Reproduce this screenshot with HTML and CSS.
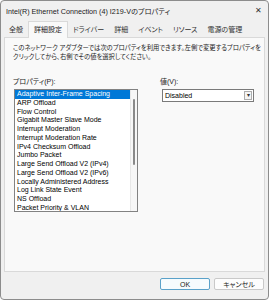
FILE: index.html
```html
<!DOCTYPE html>
<html lang="ja">
<head>
    <meta charset="UTF-8">
    <title>Intel(R) Ethernet Connection (4) I219-Vのプロパティ</title>
    <link rel="stylesheet" href="styles.css">
</head>
<body>
    <div class="window">
        <div class="titlebar">
            <span class="title">Intel(R) Ethernet Connection (4) I219-Vのプロパティ</span>
            <span class="close">✕</span>
        </div>

        <div class="tabs">
            <span class="tab">全般</span>
            <span class="tab active">詳細設定</span>
            <span class="tab">ドライバー</span>
            <span class="tab">詳細</span>
            <span class="tab">イベント</span>
            <span class="tab">リソース</span>
            <span class="tab">電源の管理</span>
        </div>

        <div class="panel">
            <p class="desc">このネットワーク アダプターでは次のプロパティを利用できます。左側で変更するプロパティを<br>クリックしてから、右側でその値を選択してください。</p>

            <div class="props">
                <div class="col-left">
                    <div class="label">プロパティ(P):</div>
                    <div class="listbox">
                        <ul class="items">
                            <li class="selected">Adaptive Inter-Frame Spacing</li>
                            <li>ARP Offload</li>
                            <li>Flow Control</li>
                            <li>Gigabit Master Slave Mode</li>
                            <li>Interrupt Moderation</li>
                            <li>Interrupt Moderation Rate</li>
                            <li>IPv4 Checksum Offload</li>
                            <li>Jumbo Packet</li>
                            <li>Large Send Offload V2 (IPv4)</li>
                            <li>Large Send Offload V2 (IPv6)</li>
                            <li>Locally Administered Address</li>
                            <li>Log Link State Event</li>
                            <li>NS Offload</li>
                            <li>Packet Priority &amp; VLAN</li>
                        </ul>
                        <div class="scrollbar"><div class="thumb"></div></div>
                    </div>
                </div>
                <div class="col-right">
                    <div class="label">値(V):</div>
                    <div class="combo">
                        <span>Disabled</span>
                        <span class="arrow">▾</span>
                    </div>
                </div>
            </div>
        </div>

        <div class="buttons">
            <button class="btn default">OK</button>
            <button class="btn">キャンセル</button>
        </div>
    </div>
</body>
</html>
```

FILE: styles.css
```css
html, body {
    margin: 0;
    padding: 0;
}
body {
    font-family: "Liberation Sans", "Noto Sans CJK JP", sans-serif;
    font-size: 7px;
    color: #1b1b1b;
    background: #ffffff;
}
.window {
    width: 269px;
    height: 300px;
    box-sizing: border-box;
    border: 1px solid #8c8c8c;
    border-radius: 4px;
    background: #f0f0f0;
    display: flex;
    flex-direction: column;
    font-feature-settings: "palt";
}
.titlebar {
    height: 19px;
    display: flex;
    align-items: center;
    justify-content: space-between;
    padding: 0 5px 0 5px;
}
.title {
    font-size: 7.2px;
}
.close {
    font-size: 8px;
    color: #333;
    margin-right: 1px;
}
.tabs {
    display: flex;
    height: 17px;
    padding-left: 3px;
    align-items: flex-end;
}
.tab {
    padding: 0 5px;
    height: 15px;
    line-height: 15px;
    color: #333;
}
.tab.active {
    background: #f9f9f9;
    border: 1px solid #d9d9d9;
    border-bottom: none;
    height: 16px;
    line-height: 16px;
    margin-bottom: -1px;
    position: relative;
    z-index: 1;
    color: #1b1b1b;
}
.panel {
    margin: 0 3px;
    height: 235px;
    box-sizing: border-box;
    border: 1px solid #d9d9d9;
    background: #f9f9f9;
    padding: 5px 8px 0 8px;
}
.desc {
    margin: 0;
    font-size: 6.3px;
    line-height: 9px;
    color: #1b1b1b;
    white-space: nowrap;
}
.props {
    display: grid;
    grid-template-columns: 125px 94px;
    column-gap: 22px;
    margin-top: 16px;
}
.label {
    line-height: 9px;
    margin-bottom: 3px;
}
.listbox {
    display: flex;
    height: 123px;
    box-sizing: border-box;
    border: 1px solid #828282;
    background: #ffffff;
    margin-left: 1px;
    overflow: hidden;
}
.items {
    list-style: none;
    margin: 0;
    padding: 0;
    flex: 1;
}
.items li {
    height: 8.75px;
    line-height: 8.75px;
    padding-left: 2px;
    white-space: nowrap;
    color: #000;
}
.items li.selected {
    background: #0078d7;
    color: #ffffff;
}
.scrollbar {
    width: 7px;
    background: #f7f7f7;
    border-left: 1px solid #e8e8e8;
    padding-top: 9px;
    box-sizing: border-box;
}
.thumb {
    width: 2px;
    height: 66px;
    margin-left: 2px;
    background: #8a8a8a;
    border-radius: 1px;
}
.combo {
    display: flex;
    justify-content: space-between;
    align-items: center;
    height: 13px;
    box-sizing: border-box;
    border: 1px solid #7a7a7a;
    background: #ffffff;
    margin-left: 2px;
    padding-left: 2px;
    padding-right: 1px;
    color: #000;
}
.arrow {
    width: 8px;
    height: 9px;
    box-sizing: border-box;
    border: 1px solid #adadad;
    background: #f4f4f4;
    font-size: 6px;
    line-height: 7px;
    text-align: center;
    color: #333;
}
.buttons {
    display: flex;
    justify-content: flex-end;
    gap: 4px;
    padding: 6px 4px 0 0;
}
.btn {
    width: 50px;
    height: 12px;
    padding: 0;
    font-family: "Liberation Sans", "Noto Sans CJK JP", sans-serif;
    font-size: 7px;
    font-feature-settings: "palt";
    color: #1b1b1b;
    background: #fdfdfd;
    border: 1px solid #c9c9c9;
    border-radius: 2px;
}
.btn.default {
    background: #f6fbfd;
    border-color: #5aa1c9;
}
```
